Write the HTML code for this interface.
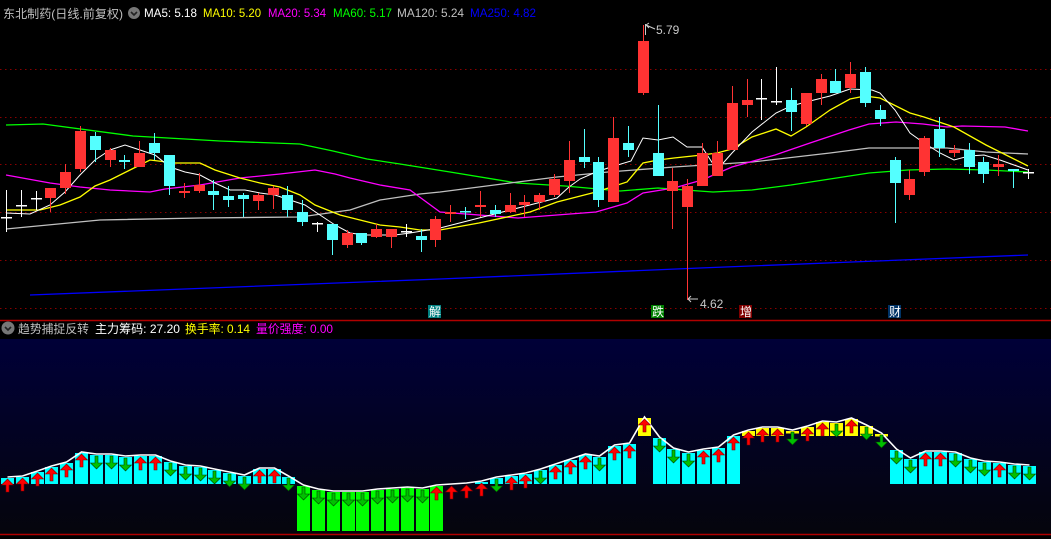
<!DOCTYPE html>
<html><head><meta charset="utf-8"><style>
html,body{margin:0;padding:0;background:#000;width:1051px;height:539px;overflow:hidden}
svg{display:block}
text{font-family:"Liberation Sans","Noto Sans CJK SC",sans-serif;font-size:12px}
</style></head><body>
<svg id="s" width="1051" height="539" viewBox="0 0 1051 539" xmlns="http://www.w3.org/2000/svg">
<defs><linearGradient id="g" x1="0" y1="0" x2="0" y2="1"><stop offset="0" stop-color="#000038"/><stop offset="1" stop-color="#05050c"/></linearGradient></defs>
<rect width="1051" height="539" fill="#000"/>
<g stroke="#8a0000" stroke-dasharray="1.5,3.5" stroke-width="1">
<line x1="0" y1="69.5" x2="1051" y2="69.5"/><line x1="0" y1="117.5" x2="1051" y2="117.5"/><line x1="0" y1="164.5" x2="1051" y2="164.5"/><line x1="0" y1="212.5" x2="1051" y2="212.5"/><line x1="0" y1="260.5" x2="1051" y2="260.5"/><line x1="0" y1="308.5" x2="1051" y2="308.5"/>
</g>
<g id="ma" fill="none" stroke-width="1.2"></g>
<g id="cd"></g>
<line x1="645.5" y1="24" x2="645.5" y2="35" stroke="#ccc"/><path d="M646 25 L655 29 M646 25 L649 23 M646 25 L649 28" stroke="#ccc" fill="none"/>
<text x="656" y="34" fill="#c8c8c8">5.79</text>
<path d="M688 299 L698 299 M688 299 L691 296 M688 299 L691 302" stroke="#ccc" fill="none"/>
<text x="700" y="308" fill="#c8c8c8">4.62</text>
<rect x="428" y="305" width="13" height="13" fill="#008080"/><text x="429" y="316" fill="#fff">解</text>
<rect x="651" y="305" width="13" height="13" fill="#008000"/><text x="652" y="316" fill="#fff">跌</text>
<rect x="739" y="305" width="13" height="13" fill="#800000"/><text x="740" y="316" fill="#fff">增</text>
<rect x="888" y="305" width="13" height="13" fill="#003366"/><text x="889" y="316" fill="#fff">财</text>
<line x1="0" y1="320.5" x2="1051" y2="320.5" stroke="#b00000" stroke-width="1.5"/>
<rect x="0" y="339" width="1051" height="195" fill="url(#g)"/>
<g id="lb"></g>
<line x1="0" y1="534.5" x2="1051" y2="534.5" stroke="#b00000" stroke-width="1.5"/>
<circle cx="134" cy="13" r="6" fill="#777"/><path d="M131 12 L134 15 L137 12" stroke="#222" stroke-width="1.6" fill="none"/>
<text x="3" y="18" fill="#c0c0c0" textLength="120" lengthAdjust="spacingAndGlyphs">东北制药(日线.前复权)</text>
<text x="144" y="17" fill="#fff" textLength="53" lengthAdjust="spacingAndGlyphs">MA5: 5.18</text>
<text x="203" y="17" fill="#ffff00" textLength="58" lengthAdjust="spacingAndGlyphs">MA10: 5.20</text>
<text x="268" y="17" fill="#ff00ff" textLength="58" lengthAdjust="spacingAndGlyphs">MA20: 5.34</text>
<text x="333" y="17" fill="#00ff00" textLength="59" lengthAdjust="spacingAndGlyphs">MA60: 5.17</text>
<text x="397" y="17" fill="#c0c0c0" textLength="67" lengthAdjust="spacingAndGlyphs">MA120: 5.24</text>
<text x="470" y="17" fill="#0000ff" textLength="66" lengthAdjust="spacingAndGlyphs">MA250: 4.82</text>
<circle cx="8" cy="328" r="6.5" fill="#777"/><path d="M5 327 L8 330 L11 327" stroke="#222" stroke-width="1.6" fill="none"/>
<text x="18" y="333" fill="#c0c0c0" textLength="71" lengthAdjust="spacingAndGlyphs">趋势捕捉反转</text>
<text x="95" y="333" fill="#fff" textLength="85" lengthAdjust="spacingAndGlyphs">主力筹码: 27.20</text>
<text x="185" y="333" fill="#ffff00" textLength="65" lengthAdjust="spacingAndGlyphs">换手率: 0.14</text>
<text x="256" y="333" fill="#ff00ff" textLength="77" lengthAdjust="spacingAndGlyphs">量价强度: 0.00</text>
</svg>
<script>
var NS="http://www.w3.org/2000/svg";
function el(p,t,a){var e=document.createElementNS(NS,t);for(var k in a)e.setAttribute(k,a[k]);p.appendChild(e);return e;}
var ma=document.getElementById('ma');
var L=[
["#00ff00","6,125 43,124 133,136 220,141 300,144 333,151 367,159 400,164 450,172 517,183 565,186 620,191 658,188 713,192 752,190 791,185 830,179 869,173 908,170 947,169 986,170 1028,172"],
["#c0c0c0","6,229 100,220 200,218 300,217 350,210 380,200 420,194 440,192 557,177 608,172 674,167 752,162 830,153 869,148 947,148 986,152 1028,154"],
["#0000ff","30,295 440,279 700,268 1028,255"],
["#ff00ff","6,175 50,183 80,187 110,190 150,192 165,189 200,185 240,178 280,174 315,170 335,174 350,178 380,185 410,190 440,212 518,218 596,212 627,203 643,193 674,188 702,180 732,167 775,155 810,143 849,130 869,124 896,122 923,124 947,127 962,126 1005,127 1028,131"],
["#ffff00","6,210 40,210 60,205 80,197 95,186 110,180 130,170 150,160 175,163 200,163 215,170 240,178 260,183 280,187 300,195 315,205 340,215 360,220 380,225 400,227 420,230 440,230 479,223 530,212 557,202 596,192 627,182 643,163 658,160 674,158 702,155 717,153 732,149 752,137 776,129 791,136 806,127 830,110 850,99 865,96 880,98 910,113 924,117 954,127 986,145 1028,166"],
["#ffffff","6,213 30,214 50,205 65,192 80,175 95,160 110,150 125,145 140,150 155,155 170,167 185,172 200,175 215,183 230,190 245,190 260,193 275,195 290,200 305,205 320,215 335,225 350,233 365,235 395,235 410,233 440,228 557,198 569,187 580,179 596,172 611,167 631,161 643,138 658,140 673,137 687,147 702,147 717,170 732,153 752,132 776,113 791,106 806,102 830,96 850,89 872,90 880,93 895,110 910,133 924,143 940,153 954,160 969,156 984,155 1000,160 1014,165 1028,170"]];
L.forEach(function(l){el(ma,'polyline',{points:l[1],stroke:l[0],'stroke-width':l[0]=="#ffffff"?1:1.3});});
var C=[[217,217,190,232,'w'],[205,205,190,217,'w'],[198,198,191,210,'w'],[188,198,188,212,'r'],[172,188,164,194,'r'],[131,169,126,172,'r'],[136,150,132,162,'c'],[150,160,148,167,'r'],[160,162,155,169,'c'],[153,167,141,167,'r'],[143,153,133,160,'c'],[155,186,155,195,'c'],[191,193,183,198,'r'],[185,191,173,193,'r'],[191,195,180,210,'c'],[196,200,186,207,'c'],[195,199,193,217,'c'],[195,201,193,210,'r'],[188,195,186,209,'r'],[195,210,186,217,'c'],[212,222,200,226,'c'],[223,223,222,232,'w'],[224,240,224,255,'c'],[233,245,230,248,'r'],[233,243,233,245,'c'],[229,237,224,238,'r'],[229,237,229,248,'r'],[231,231,224,237,'w'],[236,240,229,252,'c'],[219,240,216,247,'r'],
[212,214,205,222,'r'],[211,212,207,219,'c'],[205,207,191,217,'r'],[210,214,205,217,'c'],[205,212,193,213,'r'],[202,205,195,217,'r'],[195,202,193,210,'r'],[179,195,174,197,'r'],[160,181,141,193,'r'],[157,162,129,168,'c'],[162,200,157,207,'c'],[138,202,117,202,'r'],[143,150,126,157,'c'],[41,93,25,95,'r'],[153,176,105,176,'c'],[181,191,168,229,'r'],[186,207,179,300,'r'],
[153,186,143,186,'r'],[153,176,141,176,'r'],[103,150,86,150,'r'],[100,105,79,117,'r'],[98,98,79,120,'w'],[101,101,67,105,'w'],[100,112,88,131,'c'],[93,124,93,126,'r'],[79,93,74,105,'r'],[81,93,69,93,'c'],[74,88,62,93,'r'],[72,103,67,107,'c'],[110,119,105,126,'c'],[160,183,157,223,'c'],[179,195,170,200,'r'],[138,172,136,176,'r'],[129,148,117,157,'c'],[150,153,145,157,'r'],[150,167,143,174,'c'],[162,174,157,183,'c'],[164,167,155,176,'r'],[169,171,169,188,'c'],[172,172,169,179,'w']];
var cd=document.getElementById('cd');
var col={r:'#ff3333',c:'#54ffff',w:'#ffffff'};
C.forEach(function(c,i){var x=Math.round(6+i*14.81);var f=col[c[4]];
el(cd,'line',{x1:x+.5,x2:x+.5,y1:c[2],y2:c[3],stroke:f});
var h=c[1]-c[0];if(h<2){el(cd,'rect',{x:x-5,y:c[0],width:11,height:1.5,fill:f});}
else el(cd,'rect',{x:x-5,y:c[0],width:11,height:h,fill:f});});
var T=[478,477,472,467,463,453,455,455,457,456,456,462,466,467,470,473,476,469,469,477,486,490,492,492,492,490,489,488,489,486,485,484,482,478,476,474,470,465,460,455,457,446,444,418,438,449,453,450,448,436,431,428,428,431,427,422,423,419,426,434,450,459,452,452,453,459,462,463,465,466];
var dir=["u","u","u","u","u","u","d","d","d","u","u","d","d","d","d","d","d","u","u","d",
"d","d","d","d","d","d","d","d","d","u",
"u","u","u","d","u","u","d","u","u","u","d","u","u","u",
"d","d","d","u","u","u",
"u","u","u","d","u","u","d","u","d","d",
"d","d","u","u","d","d","d","u","d","d"];
var lb=document.getElementById('lb');var pts=[];
T.forEach(function(t,i){var x0=Math.round(1+i*14.81);var cx=x0+6.5;var fill,bot;
if(i>=20&&i<=29){fill='#00ff00';bot=531;}
else if(i==43||(i>=50&&i<=59)){fill='#ffff00';bot=436;if(i==53||i==59)bot=t+2.5;}
else {fill='#00ffff';bot=484;}
el(lb,'rect',{x:x0,y:t,width:13,height:bot-t,fill:fill});
pts.push(cx+','+(t-1));});
el(lb,'polyline',{points:pts.join(' '),fill:'none',stroke:'#fff','stroke-width':1.6});
T.forEach(function(t,i){var cx=Math.round(1+i*14.81)+6.5;var y=t+1;
if(dir[i]=='u'){el(lb,'path',{d:'M'+cx+' '+y+' L'+(cx+6)+' '+(y+6)+' L'+(cx+1.5)+' '+(y+6)+' L'+(cx+1.5)+' '+(y+13)+' L'+(cx-1.5)+' '+(y+13)+' L'+(cx-1.5)+' '+(y+6)+' L'+(cx-6)+' '+(y+6)+'Z',fill:'#ff0000',stroke:'#800000','stroke-width':.6});}
else{el(lb,'path',{d:'M'+cx+' '+(y+13)+' L'+(cx+6)+' '+(y+7)+' L'+(cx+1.5)+' '+(y+7)+' L'+(cx+1.5)+' '+y+' L'+(cx-1.5)+' '+y+' L'+(cx-1.5)+' '+(y+7)+' L'+(cx-6)+' '+(y+7)+'Z',fill:'#00c000',stroke:'#004000','stroke-width':.6});}});
</script>
</body></html>
